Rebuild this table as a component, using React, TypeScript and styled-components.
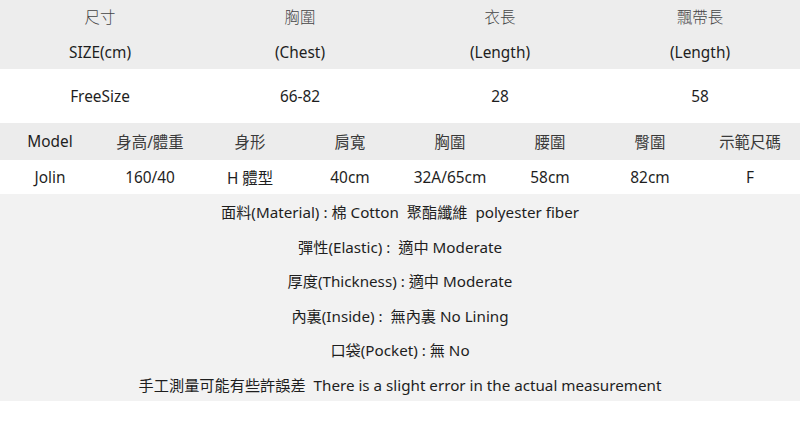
import React from "react";
import styled, { createGlobalStyle } from "styled-components";

const Global = createGlobalStyle`
  html, body { margin: 0; padding: 0; background: #ffffff; }
  body {
    font-family: "Noto Sans", "Noto Sans CJK TC", sans-serif;
    color: #1e1e1e;
    width: 800px;
    height: 438px;
    overflow: hidden;
  }
`;

const Page = styled.div`
  width: 800px;
  display: flex;
  flex-direction: column;
`;

const Grid = styled.div<{ $cols: number }>`
  display: grid;
  grid-template-columns: repeat(${(p) => p.$cols}, 1fr);
`;

const Cell = styled.div<{ $h: number; $bg: string; $muted?: boolean }>`
  height: ${(p) => p.$h}px;
  background: ${(p) => p.$bg};
  color: ${(p) => (p.$muted ? "#3a3a3a" : "#1e1e1e")};
  display: flex;
  align-items: center;
  justify-content: center;
  font-size: 15.4px;
  white-space: nowrap;
`;

const HeadCell = styled.div`
  height: 69px;
  background: #ededed;
  display: flex;
  flex-direction: column;
  align-items: center;
  justify-content: center;
  font-size: 15.4px;
  line-height: 35px;
`;

const Cjk = styled.span`
  color: #444444;
  font-weight: 300;
`;

const Notes = styled.div`
  background: #f2f2f2;
  height: 207px;
  display: flex;
  flex-direction: column;
`;

const Line = styled.div`
  height: 34.5px;
  display: flex;
  align-items: center;
  justify-content: center;
  font-size: 15.2px;
  white-space: pre;
`;

const sizeHead = [
  ["尺寸", "SIZE(cm)"],
  ["胸圍", "(Chest)"],
  ["衣長", "(Length)"],
  ["飄帶長", "(Length)"],
];
const sizeRow = ["FreeSize", "66-82", "28", "58"];
const modelHead = ["Model", "身高/體重", "身形", "肩寬", "胸圍", "腰圍", "臀圍", "示範尺碼"];
const modelRow = ["Jolin", "160/40", "H 體型", "40cm", "32A/65cm", "58cm", "82cm", "F"];
const notes = [
  "面料(Material) : 棉 Cotton  聚酯纖維  polyester fiber",
  "彈性(Elastic) :  適中 Moderate",
  "厚度(Thickness) : 適中 Moderate",
  "內裏(Inside) :  無內裏 No Lining",
  "口袋(Pocket) : 無 No",
  "手工測量可能有些許誤差  There is a slight error in the actual measurement",
];

export default function App() {
  return (
    <Page>
      <Global />
      <Grid $cols={4}>
        {sizeHead.map(([a, b], i) => (
          <HeadCell key={i}>
            <Cjk>{a}</Cjk>
            <span>{b}</span>
          </HeadCell>
        ))}
        {sizeRow.map((t, i) => (
          <Cell key={i} $h={54} $bg="#ffffff">{t}</Cell>
        ))}
      </Grid>
      <Grid $cols={8}>
        {modelHead.map((t, i) => (
          <Cell key={i} $h={37} $bg="#ececec" $muted={i > 0}>{t}</Cell>
        ))}
        {modelRow.map((t, i) => (
          <Cell key={i} $h={34} $bg="#ffffff">{t}</Cell>
        ))}
      </Grid>
      <Notes>
        {notes.map((t, i) => (
          <Line key={i}>{t}</Line>
        ))}
      </Notes>
    </Page>
  );
}
